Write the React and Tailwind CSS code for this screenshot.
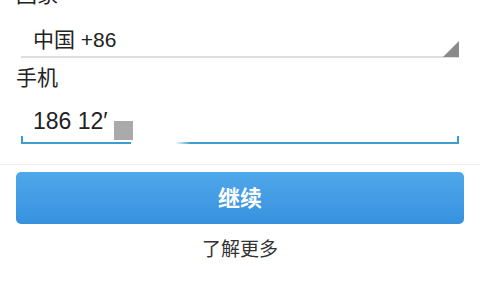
import React from "react";

export default function App() {
  return (
    <div
      className="w-[480px] h-[300px] overflow-hidden bg-white text-[#222]"
      style={{ fontFamily: '"Liberation Sans", "Noto Sans CJK SC", sans-serif' }}
    >
      <div className="px-4">
        {/* Country */}
        <div className="mt-[-17px] h-[24px] text-[21px] leading-[24px]">国家</div>
        <div className="relative ml-[5px] mt-[15px] h-[36px] w-[438px] border-b-2 border-[#dddddd]">
          <div className="pl-[12px] text-[21px] leading-[36px]">中国 +86</div>
          <svg className="absolute right-0 bottom-[-1px]" width="16" height="16" viewBox="0 0 16 16">
            <polygon points="16,0 16,16 0,16" fill="#8a8a8a" />
          </svg>
        </div>

        {/* Phone */}
        <div className="mt-[8px] h-[24px] text-[21px] leading-[24px]">手机</div>
        <div className="relative ml-[5px] h-[54px] w-[438px] border-b-2 border-[#3d9dcc]">
          <div className="pl-[12px] pt-[19px] text-[23px] leading-[24px]">186 12′</div>
          <div className="absolute left-0 bottom-0 h-[6px] w-[2px] bg-[#3d9dcc]" />
          <div className="absolute right-0 bottom-0 h-[6px] w-[2px] bg-[#3d9dcc]" />
          {/* redaction */}
          <div className="absolute left-[110px] top-[31px] h-[26px] w-[44px] bg-white" />
          <div className="absolute left-[154px] top-[31px] h-[26px] w-[16px] bg-gradient-to-r from-white to-transparent" />
          <div className="absolute left-[93px] top-[31px] h-[19px] w-[19px] bg-[#aaaaaa]" />
        </div>
      </div>

      <div className="mt-[20px] h-px bg-[#eeeeee]" />

      <div className="px-4">
        <button className="mt-[7px] flex h-[52px] w-full items-center justify-center rounded-[5px] bg-gradient-to-b from-[#4fa8ea] to-[#3891de] text-[22px] font-bold text-white">
          继续
        </button>
        <div className="mt-[14px] text-center text-[19px] leading-[24px] text-[#333]">了解更多</div>
      </div>
    </div>
  );
}
